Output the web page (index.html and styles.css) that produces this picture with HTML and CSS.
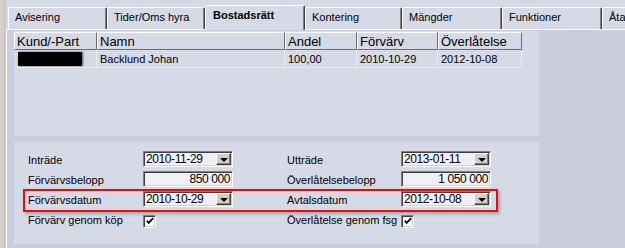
FILE: index.html
```html
<!DOCTYPE html>
<html lang="sv">
<head>
<meta charset="utf-8">
<title>Bostadsrätt</title>
<link rel="stylesheet" href="styles.css">
</head>
<body>
<div class="strip"></div>
<div class="main">
  <div class="tabs">
    <div class="tab w99">Avisering</div>
    <div class="tab w98">Tider/Oms hyra</div>
    <div class="tab active w100">Bostadsrätt</div>
    <div class="tab w97">Kontering</div>
    <div class="tab w100">Mängder</div>
    <div class="tab w100">Funktioner</div>
    <div class="tab w60">Åta</div>
  </div>
  <div class="page">
    <div class="panel top">
      <div class="grid">
        <div class="hcell">Kund/-Part</div>
        <div class="hcell">Namn</div>
        <div class="hcell">Andel</div>
        <div class="hcell">Förvärv</div>
        <div class="hcell">Överlåtelse</div>
        <div class="cell redact-wrap">1<span class="redact"></span></div>
        <div class="cell">Backlund Johan</div>
        <div class="cell">100,00</div>
        <div class="cell">2010-10-29</div>
        <div class="cell">2012-10-08</div>
      </div>
    </div>
    <div class="panel bottom">
      <div class="form">
        <div class="label">Inträde</div>
        <div class="combo"><span class="val">2010-11-29</span><span class="btn"><span class="arrow"></span></span></div>
        <div></div>
        <div class="label">Utträde</div>
        <div class="combo"><span class="val">2013-01-11</span><span class="btn"><span class="arrow"></span></span></div>

        <div class="label">Förvärvsbelopp</div>
        <div class="field"><span class="val">850 000</span></div>
        <div></div>
        <div class="label">Överlåtelsebelopp</div>
        <div class="field"><span class="val">1 050 000</span></div>

        <div class="label">Förvärvsdatum</div>
        <div class="combo"><span class="val">2010-10-29</span><span class="btn"><span class="arrow"></span></span></div>
        <div></div>
        <div class="label">Avtalsdatum</div>
        <div class="combo"><span class="val">2012-10-08</span><span class="btn"><span class="arrow"></span></span></div>

        <div class="label">Förvärv genom köp</div>
        <div class="chkcell"><span class="check"><svg width="11" height="11" viewBox="0 0 11 11"><path d="M2 4.5 L4 7 L9 1.8" fill="none" stroke="#000" stroke-width="2"/></svg></span></div>
        <div></div>
        <div class="label">Överlåtelse genom fsg</div>
        <div class="chkcell"><span class="check"><svg width="11" height="11" viewBox="0 0 11 11"><path d="M2 4.5 L4 7 L9 1.8" fill="none" stroke="#000" stroke-width="2"/></svg></span></div>
      </div>
      <div class="highlight"></div>
    </div>
  </div>
</div>
</body>
</html>
```

FILE: styles.css
```css
html, body {
  margin: 0;
  padding: 0;
}
body {
  width: 625px;
  height: 248px;
  overflow: hidden;
  display: flex;
  background: #d6dae6;
  font-family: "Liberation Sans", Arial, sans-serif;
  font-size: 11px;
  color: #000;
}
.strip {
  width: 6px;
  flex-shrink: 0;
  background: linear-gradient(to right, #ddd6d0, #cdc6c0);
}
.main {
  flex: 1;
  display: flex;
  flex-direction: column;
  min-width: 0;
}
.tabs {
  height: 29px;
  flex-shrink: 0;
  display: flex;
  align-items: flex-end;
  padding-left: 2px;
  position: relative;
  z-index: 1;
}
.tab {
  flex-shrink: 0;
  box-sizing: border-box;
  height: 22px;
  padding: 3px 0 0 6px;
  background: #d6dae6;
  border-top: 1px solid #fff;
  border-left: 1px solid #fff;
  border-right: 1px solid #404040;
  box-shadow: inset -1px 0 #808080;
  border-radius: 2px 2px 0 0;
  white-space: nowrap;
  overflow: hidden;
}
.tab.active {
  height: 25px;
  margin-bottom: -1px;
  padding-top: 3px;
  font-weight: bold;
  padding-left: 7px;
}
.w97 { width: 97px; }
.w98 { width: 98px; }
.w99 { width: 99px; }
.w100 { width: 100px; }
.w60 { width: 60px; }

.page {
  flex: 1;
  background: #cbcddd;
  border-top: 1px solid #fff;
  border-left: 1px solid #fff;
  padding: 1px 0 0 7px;
  display: flex;
  flex-direction: column;
  gap: 6px;
}
.panel {
  width: 525px;
  background: #d6dae6;
  box-sizing: border-box;
}
.panel.top {
  height: 105px;
  padding-top: 1px;
}
.panel.bottom {
  height: 102px;
  position: relative;
  padding: 9px 0 0 14px;
}
.grid {
  display: grid;
  grid-template-columns: 83px 188px 72px 81px 84px;
  grid-template-rows: 18px 18px;
}
.hcell {
  box-sizing: border-box;
  font-size: 13px;
  line-height: 15px;
  padding: 1px 0 0 2px;
  border-top: 1px solid #fff;
  border-left: 1px solid #fff;
  border-right: 1px solid #6c6c6c;
  border-bottom: 1px solid #6c6c6c;
  white-space: nowrap;
  overflow: hidden;
}
.cell {
  box-sizing: border-box;
  line-height: 17px;
  padding: 1px 0 0 3px;
  border-right: 1px solid #ecebe2;
  border-bottom: 1px solid #ecebe2;
  white-space: nowrap;
  overflow: hidden;
}
.redact-wrap {
  position: relative;
}
.redact {
  position: absolute;
  left: 4px;
  top: 2px;
  width: 64px;
  height: 14px;
  background: #000;
  box-shadow: 1px 0 2px rgba(0, 0, 0, 0.6);
}

.form {
  display: grid;
  grid-template-columns: 115px 90px 54px 114px 90px;
  grid-auto-rows: 16px;
  row-gap: 4px;
  align-items: center;
}
.label {
  white-space: nowrap;
  line-height: 16px;
  padding-top: 2px;
}
.combo, .field {
  box-sizing: border-box;
  height: 16px;
  border: 1px solid;
  border-color: #808080 #fff #fff #808080;
  box-shadow: inset 1px 1px #404040, inset -1px -1px #d4d0c8;
  background: #eef0f6;
  display: flex;
  align-items: center;
  padding: 1px 1px 1px 2px;
}
.val {
  flex: 1;
  font-size: 12px;
  letter-spacing: -0.4px;
  line-height: 12px;
  white-space: nowrap;
}
.field .val {
  text-align: right;
  padding-right: 1px;
}
.btn {
  box-sizing: border-box;
  width: 15px;
  height: 12px;
  background: #d4d0c8;
  border: 1px solid;
  border-color: #fff #404040 #404040 #fff;
  box-shadow: inset -1px -1px #808080;
  display: flex;
  align-items: center;
  justify-content: center;
}
.arrow {
  width: 0;
  height: 0;
  border-left: 4px solid transparent;
  border-right: 4px solid transparent;
  border-top: 4px solid #000;
  margin-top: 1px;
}
.chkcell {
  display: flex;
  align-items: center;
  padding-top: 4px;
}
.check {
  box-sizing: border-box;
  width: 13px;
  height: 13px;
  background: #fff;
  border: 1px solid;
  border-color: #808080 #fff #fff #808080;
  box-shadow: inset 1px 1px #404040, inset -1px -1px #d4d0c8;
  display: flex;
  align-items: center;
  justify-content: center;
}
.check svg {
  display: block;
  margin: 1px 0 0 1px;
}
.highlight {
  position: absolute;
  left: 9px;
  top: 47px;
  width: 475px;
  height: 23px;
  box-sizing: border-box;
  border: 2px solid #ee0a0a;
  box-shadow: 2px 2px 3px rgba(60, 60, 80, 0.35);
  pointer-events: none;
}
```
